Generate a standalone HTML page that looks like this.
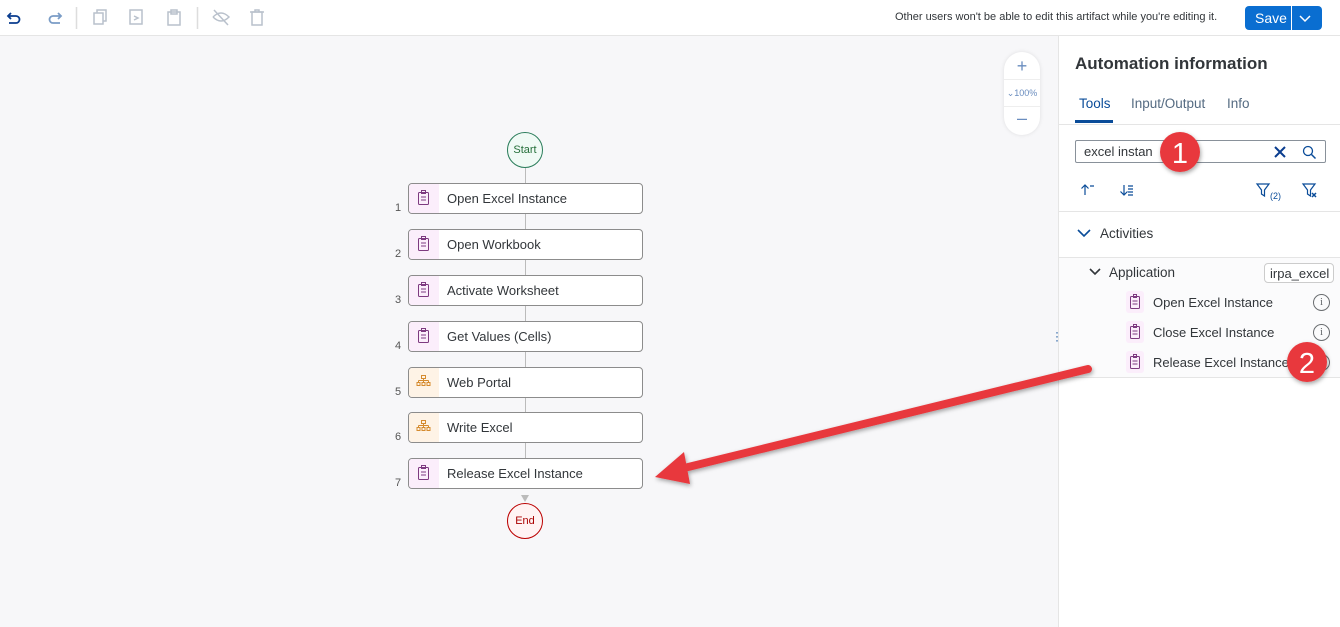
<!DOCTYPE html>
<html><head><style>
*{box-sizing:border-box;margin:0;padding:0}
body{width:1340px;height:627px;overflow:hidden;font-family:"Liberation Sans",Arial,sans-serif;background:#f7f7f9;position:relative;color:#32363a}
.a{position:absolute}
.tb{left:0;top:0;width:1340px;height:36px;background:#fff;border-bottom:1px solid #e5e5e5}
.node{position:absolute;left:408px;width:235px;height:31px;background:#fff;border:1px solid #8c8c8c;border-radius:4px;overflow:hidden;font-size:13px}
.node .ic{position:absolute;left:0;top:0;width:30px;height:100%;background:#fbeefb}
.node .ic.o{background:#fef3e6}
.node span{position:absolute;left:38px;top:7px}
.num{position:absolute;left:395px;font-size:11px;color:#555}
.line{position:absolute;left:525px;width:1px;background:#bbb}
.rp{left:1058px;top:36px;width:282px;height:591px;background:#fff;border-left:1px solid #e5e5e5}
.hr{position:absolute;left:0;width:282px;height:1px;background:#e5e5e5}
.item{position:absolute;left:1126px;font-size:13px}
.item span{position:absolute;left:27px;top:0;white-space:nowrap}
.info{position:absolute;left:1313px;width:17px;height:17px;border:1px solid #6a6d70;border-radius:50%;font-size:11px;text-align:center;line-height:15px;color:#6a6d70;font-family:"Liberation Serif",serif}
</style></head><body>
<div class="a tb"></div>
<svg class="a" style="left:0;top:0" width="280" height="36">
<g fill="none" stroke-width="1.5">
<path d="M11 13 l-3 3 l3 3 M8 16 h8 a3.5 3.5 0 0 1 0 7 h-7" stroke="#0a3d8f" stroke-width="1.8"/>
<path d="M58 13 l3 3 l-3 3 M61 16 h-8 a3.5 3.5 0 0 0 0 7 h7" stroke="#7a9cc6" stroke-width="1.8"/>
<line x1="76.5" y1="7" x2="76.5" y2="29" stroke="#ddd"/>
<g stroke="#b9c1cc"><rect x="94" y="13" width="9" height="11"/><path d="M97 13 v-3 h9 v11 h-3"/>
<rect x="130" y="10" width="12" height="14"/><path d="M134 16 l4 2 l-4 2"/>
<rect x="168" y="12" width="12" height="13"/><rect x="171" y="10" width="6" height="4"/>
<line x1="197.5" y1="7" x2="197.5" y2="29" stroke="#ddd"/>
<path d="M213 17 q8 -8 16 0 q-8 8 -16 0 M214 10 l14 15"/>
<rect x="252" y="12" width="10" height="13"/><path d="M250 12 h14 M255 12 v-2 h4 v2"/></g></g></svg>
<div class="a" style="left:895px;top:11px;font-size:11px;color:#32363a">Other users won't be able to edit this artifact while you're editing it.</div>
<div class="a" style="left:1245px;top:6px;width:77px;height:24px;background:#0a6ed1;border-radius:4px;color:#fff;font-size:14px"><span style="position:absolute;left:10px;top:4px">Save</span><div style="position:absolute;left:46px;top:0;width:1px;height:24px;background:#fff"></div><svg style="position:absolute;left:53px;top:7px" width="14" height="10"><path d="M2 3 l5 5 l5 -5" stroke="#fff" fill="none" stroke-width="1.5"/></svg></div>
<div class="a" style="left:1004px;top:52px;width:36px;height:83px;background:#fff;border-radius:18px;box-shadow:0 0 4px rgba(0,0,0,.1)"><div style="position:absolute;left:0;top:4px;width:36px;text-align:center;color:#6a8dbf;font-size:18px">+</div><div style="position:absolute;left:0;top:36px;width:36px;text-align:center;color:#6a8dbf;font-size:9px">⌄100%</div><div style="position:absolute;left:0;top:27px;width:36px;height:1px;background:#eee"></div><div style="position:absolute;left:0;top:54px;width:36px;height:1px;background:#eee"></div><div style="position:absolute;left:0;top:56px;width:36px;text-align:center;color:#6a8dbf;font-size:18px">–</div></div>
<div class="line" style="top:168px;height:305px"></div>
<div class="a" style="left:507px;top:132px;width:36px;height:36px;border:1px solid #2b7d5b;border-radius:50%;background:#f0faf5;color:#256f3a;font-size:11px;text-align:center;line-height:34px">Start</div>
<div class="a" style="left:507px;top:503px;width:36px;height:36px;border:1px solid #bb0000;border-radius:50%;background:#fff3f3;color:#a00;font-size:11px;text-align:center;line-height:34px">End</div>
<svg class="a" style="left:520px;top:489px" width="10" height="14"><path d="M1 6 h8 l-4 7z" fill="#bbb"/></svg>

<div class="node" style="top:183px"><div class="ic"></div><span>Open Excel Instance</span></div><div class="num" style="top:202px">1</div>
<div class="node" style="top:229px"><div class="ic"></div><span>Open Workbook</span></div><div class="num" style="top:248px">2</div>
<div class="node" style="top:275px"><div class="ic"></div><span>Activate Worksheet</span></div><div class="num" style="top:294px">3</div>
<div class="node" style="top:321px"><div class="ic"></div><span>Get Values (Cells)</span></div><div class="num" style="top:340px">4</div>
<div class="node" style="top:367px"><div class="ic o"></div><span>Web Portal</span></div><div class="num" style="top:386px">5</div>
<div class="node" style="top:412px"><div class="ic o"></div><span>Write Excel</span></div><div class="num" style="top:431px">6</div>
<div class="node" style="top:458px"><div class="ic"></div><span>Release Excel Instance</span></div><div class="num" style="top:477px">7</div>
<svg class="a" style="left:408px;top:183px" width="30" height="310"><g fill="none" stroke="#7d3a80" stroke-width="1">
<g id="c"><rect x="10.5" y="9.5" width="10" height="12" rx="1"/><rect x="13.5" y="7.5" width="4" height="3"/><path d="M13 14 h5 M13 17 h5"/></g>
<use href="#c" y="46"/><use href="#c" y="92"/><use href="#c" y="138"/><use href="#c" y="275"/></g>
<g fill="none" stroke="#d58b2f" stroke-width="1"><g id="o"><rect x="13.5" y="192.5" width="4" height="3"/><path d="M15.5 195.5 v2 M10.5 197.5 h10 M10.5 197.5 v2 M15.5 197.5 v2 M20.5 197.5 v2"/><rect x="9" y="199.5" width="3" height="3"/><rect x="14" y="199.5" width="3" height="3"/><rect x="19" y="199.5" width="3" height="3"/></g><use href="#o" y="45"/></g></svg>

<div class="a rp">
<div class="a" style="left:16px;top:18px;font-size:17px;font-weight:bold;color:#32363a">Automation information</div>
<div class="a" style="left:20px;top:60px;font-size:13.5px;color:#0a4c99">Tools</div>
<div class="a" style="left:72px;top:60px;font-size:13.5px;color:#556b82">Input/Output</div>
<div class="a" style="left:168px;top:60px;font-size:13.5px;color:#556b82">Info</div>
<div class="a" style="left:16px;top:84px;width:38px;height:3px;background:#0a4c99"></div>
<div class="hr" style="top:88px"></div>
<div class="a" style="left:16px;top:104px;width:251px;height:23px;border:1px solid #89919a;border-radius:2px;font-size:13px;padding:3px 8px">excel instan</div>
<svg class="a" style="left:212px;top:107px" width="55" height="18"><path d="M4 4 l10 10 M14 4 l-10 10" stroke="#0a3d8f" stroke-width="2"/><circle cx="37" cy="8" r="4.5" fill="none" stroke="#0a4c99" stroke-width="1.3"/><path d="M40.5 11.5 l4 4" stroke="#0a4c99" stroke-width="1.5"/></svg>
<svg class="a" style="left:0;top:140px" width="282" height="30"><g fill="none" stroke="#0a4c99" stroke-width="1.2">
<path d="M26 9 v10 M22.5 12.5 l3.5 -3.5 l3.5 3.5 M31 10 h4"/>
<path d="M65 9 v10 M61.5 15.5 l3.5 3.5 l3.5 -3.5 M69 10 h5 M69 13 h5 M69 16 h5 M69 19 h5"/>
<path d="M198 8 h12 l-4.5 6 v6 l-3 -2 v-4 z"/>
<path d="M244 8 h12 l-4.5 6 v6 l-3 -2 v-4 z"/><path d="M253 17 l4 4 M257 17 l-4 4" stroke-width="1.5"/></g>
<text x="211" y="23" font-family="Liberation Sans" font-size="9" fill="#0a4c99">(2)</text></svg>
<div class="hr" style="top:175px"></div>
<svg class="a" style="left:18px;top:192px" width="14" height="10"><path d="M1 2 l6 6 l6 -6" stroke="#0a4c99" fill="none" stroke-width="1.6"/></svg>
<div class="a" style="left:41px;top:190px;font-size:13.5px">Activities</div>
<div class="hr" style="top:221px"></div>
<div class="a" style="left:0;top:222px;width:282px;height:119px;background:#fbfbfc"></div>
<svg class="a" style="left:30px;top:231px" width="14" height="10"><path d="M1 2 l5 5 l5 -5" stroke="#32363a" fill="none" stroke-width="1.6"/></svg>
<div class="a" style="left:50px;top:229px;font-size:13.5px">Application</div>
<div class="a" style="left:205px;top:227px;width:70px;height:20px;border:1px solid #ccc;border-radius:4px;background:#fff;font-size:13px;padding:2px 5px;color:#32363a">irpa_excel</div>
<div class="hr" style="top:341px"></div>
</div>
<div class="a" style="left:1126px;top:291px;width:18px;height:22px;background:#fbeefb;border-radius:3px"></div>
<div class="a" style="left:1126px;top:321px;width:18px;height:22px;background:#fbeefb;border-radius:3px"></div>
<div class="a" style="left:1126px;top:351px;width:18px;height:22px;background:#fbeefb;border-radius:3px"></div>
<div class="item" style="top:295px"><span>Open Excel Instance</span></div>
<div class="item" style="top:325px"><span>Close Excel Instance</span></div>
<div class="item" style="top:355px"><span>Release Excel Instance</span></div>
<svg class="a" style="left:1126px;top:291px" width="18" height="90"><g fill="none" stroke="#7d3a80" stroke-width="1"><g id="d"><rect x="4.5" y="5.5" width="9" height="12" rx="1"/><rect x="7.5" y="3.5" width="3" height="3"/><path d="M6.5 10 h5 M6.5 13 h5"/></g><use href="#d" y="30"/><use href="#d" y="60"/></g></svg>
<div class="info" style="top:294px">i</div>
<div class="info" style="top:324px">i</div>
<div class="info" style="top:354px">i</div>
<div class="a" style="left:1055px;top:330px;width:4px;height:14px;font-size:12px;color:#0a4c99;line-height:4px">·<br>·<br>·</div>
<svg class="a" style="left:0;top:0" width="1340" height="627">
<defs><filter id="s"><feDropShadow dx="1" dy="2" stdDeviation="2" flood-opacity=".35"/></filter></defs>
<g filter="url(#s)">
<line x1="1088" y1="369" x2="680" y2="469" stroke="#e8383d" stroke-width="8" stroke-linecap="round"/>
<path d="M655 477 L684 452 L690 484 Z" fill="#e8383d"/>
<circle cx="1180" cy="152" r="20" fill="#e8383d"/>
<circle cx="1307" cy="362" r="20" fill="#e8383d"/>
</g>
<text x="1180" y="163" font-family="Liberation Sans" font-size="29" fill="#fff" text-anchor="middle">1</text>
<text x="1307" y="373" font-family="Liberation Sans" font-size="29" fill="#fff" text-anchor="middle">2</text>
</svg>
</body></html>
